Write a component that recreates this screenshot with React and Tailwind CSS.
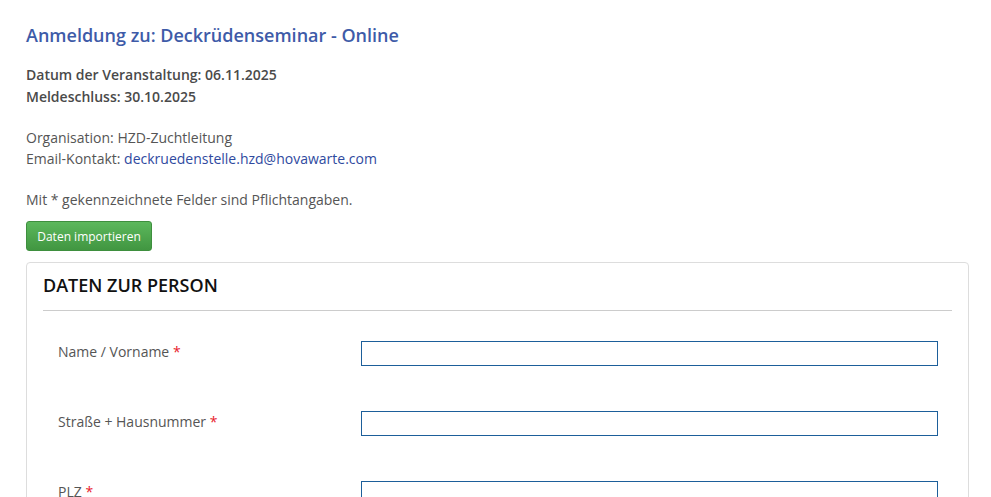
import React from 'react';

const fields = ['Name / Vorname', 'Straße + Hausnummer', 'PLZ'];

const App = () => {
  return (
    <div className="min-h-screen bg-white px-[26px] pt-[22px] text-[14px] leading-[21px] text-[#555]" style={{ fontFamily: '"Open Sans", sans-serif' }}>
      <h1 className="text-[18px] leading-[26px] font-semibold text-[#3e5ba8]">Anmeldung zu: Deckrüdenseminar - Online</h1>

      <div className="mt-[16px] font-semibold text-[#4a4a4a] leading-[22px]">
        <div>Datum der Veranstaltung: 06.11.2025</div>
        <div>Meldeschluss: 30.10.2025</div>
      </div>

      <div className="mt-[19px]">
        <div>Organisation: HZD-Zuchtleitung</div>
        <div>
          Email-Kontakt: <a className="text-[#2f4aa0]">deckruedenstelle.hzd@hovawarte.com</a>
        </div>
      </div>

      <p className="mt-[20px]">Mit * gekennzeichnete Felder sind Pflichtangaben.</p>

      <button className="mt-[11px] h-[30px] w-[126px] rounded-[3px] border border-[#3e8f3e] bg-gradient-to-b from-[#5cb85c] to-[#419641] text-[12px] text-white">
        Daten importieren
      </button>

      <div className="mt-[11px] w-[943px] rounded-[4px] border border-[#ddd] px-4 pb-4">
        <h2 className="border-b border-[#ccc] pt-[10px] pb-[13px] text-[18px] leading-[24px] font-semibold text-[#111]">DATEN ZUR PERSON</h2>
        <div className="pl-[15px] pt-[30px]">
          {fields.map((f) => (
            <div key={f} className="flex items-center h-[24px] mb-[46px]">
              <label className="w-[303px] shrink-0 pb-[3px] text-[#555]">
                {f} <span className="text-[#e8212b]">*</span>
              </label>
              <input className="h-[25px] w-[577px] shrink-0 border border-[#1d5f9a] outline-none" />
            </div>
          ))}
        </div>
      </div>
    </div>
  );
};

export default App;
